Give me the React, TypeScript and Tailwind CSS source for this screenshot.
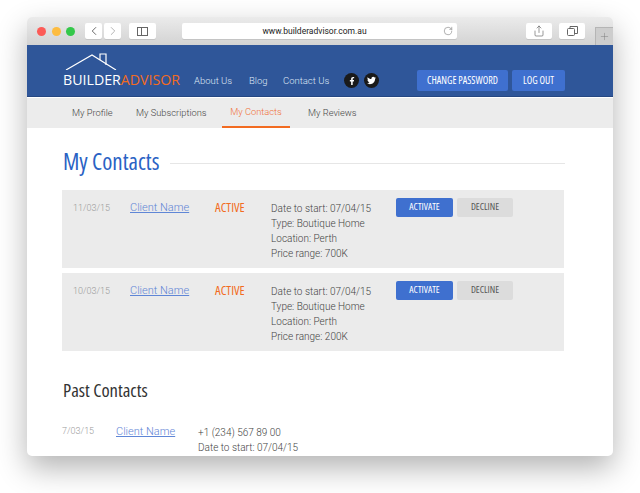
import React from 'react';
import { ChevronLeft, ChevronRight, RotateCw, Share, Plus } from 'lucide-react';
import { FaFacebookF, FaTwitter } from 'react-icons/fa';

const narrow = "font-['Open_Sans',sans-serif] [font-stretch:75%]";

const Toolbar = () => (
  <div className="flex h-[28px] items-center bg-gradient-to-b from-[#ebebeb] to-[#d3d3d3] relative">
    <div className="flex items-center gap-[5.5px] ml-[10px] mr-[11px]">
      <span className="h-[9px] w-[9px] rounded-full bg-[#fc5b57]" />
      <span className="h-[9px] w-[9px] rounded-full bg-[#fdbc40]" />
      <span className="h-[9px] w-[9px] rounded-full bg-[#34c84a]" />
    </div>
    <div className="flex gap-[2px] mr-[8px] -ml-[1px]">
      <button className="flex h-[16px] w-[17px] items-center justify-center rounded-[2px] bg-white shadow-[0_1px_0_#c4c4c4]">
        <ChevronLeft size={14} strokeWidth={1.5} className="text-[#555]" />
      </button>
      <button className="flex h-[16px] w-[17px] items-center justify-center rounded-[2px] bg-white shadow-[0_1px_0_#c4c4c4]">
        <ChevronRight size={14} strokeWidth={1.5} className="text-[#aaa]" />
      </button>
    </div>
    <button className="flex h-[16px] w-[27px] items-center justify-center rounded-[2px] bg-white shadow-[0_1px_0_#c4c4c4] mr-[26px]">
      <span className="flex h-[9px] w-[11px] border border-[#666]">
        <span className="w-[4px] border-r border-[#666]" />
      </span>
    </button>
    <div className="flex h-[16px] w-[275px] items-center rounded-[2px] bg-white shadow-[0_1px_0_#c4c4c4] relative mr-[69px]">
      <span className="flex-1 pr-[10px] text-center font-['Roboto',sans-serif] text-[8.5px] text-[#222]">www.builderadvisor.com.au</span>
      <RotateCw size={10} strokeWidth={1.2} className="absolute right-[4px] text-[#666]" />
    </div>
    <button className="flex h-[16px] w-[26px] items-center justify-center rounded-[2px] bg-white shadow-[0_1px_0_#c4c4c4] mr-[7px]">
      <Share size={12} strokeWidth={1.2} className="text-[#555]" />
    </button>
    <button className="flex h-[16px] w-[26px] items-center justify-center rounded-[2px] bg-white shadow-[0_1px_0_#c4c4c4]">
      <svg width="11" height="10" viewBox="0 0 11 10" fill="none" stroke="#666" strokeWidth="1">
        <rect x="0.5" y="2.5" width="7" height="7" rx="1" />
        <path d="M3 2.5V0.5H10.5V7.5H7.5" />
      </svg>
    </button>
    <div className="absolute right-0 bottom-0 flex h-[18px] w-[18px] items-center justify-center border-l border-t border-[#b5b5b5] bg-[#cdcdcd]">
      <Plus size={11} strokeWidth={1} className="text-[#777]" />
    </div>
  </div>
);

const Header = () => (
  <div className="flex h-[52px] items-end border-b-[1px] border-[#254782] bg-[#2f5699] pl-[36px] pb-[5px]">
    <div className="w-[118px] shrink-0 mr-[13px] mb-[2px]">
      <svg width="60" height="20" viewBox="0 0 60 20" className="ml-[2px] block" fill="none" stroke="white" strokeWidth="1.2">
        <path d="M1 20L27 5L51 20" />
        <path d="M35 10V4H41V15" />
      </svg>
      <div className="font-['Open_Sans',sans-serif] text-[14.2px] leading-[19px] whitespace-nowrap">
        <span className="text-white">BUILDER</span>
        <span className="text-[#f26b21]">ADVISOR</span>
      </div>
    </div>
    <nav className="flex h-[21px] items-center pt-[1px] font-['Roboto',sans-serif] font-light text-[9.5px] text-[#dde5f3]">
      <a className="w-[55px]">About Us</a>
      <a className="w-[34px]">Blog</a>
      <a className="w-[61px]">Contact Us</a>
    </nav>
    <div className="flex h-[21px] items-center gap-[5px] mr-[38px]">
      <span className="flex h-[15px] w-[15px] items-center justify-center rounded-full bg-[#1a1a1a]"><FaFacebookF size={8} className="text-white" /></span>
      <span className="flex h-[15px] w-[15px] items-center justify-center rounded-full bg-[#1a1a1a]"><FaTwitter size={9} className="text-white" /></span>
    </div>
    <div className={`flex gap-[4px] ${narrow} text-[10.1px] text-white`}>
      <button className="h-[21px] w-[91px] rounded-[2px] bg-[#3f70cf] whitespace-nowrap">CHANGE PASSWORD</button>
      <button className="h-[21px] w-[53px] rounded-[2px] bg-[#3f70cf] whitespace-nowrap">LOG OUT</button>
    </div>
  </div>
);

const SubNav = () => (
  <div className="mt-[1px] flex h-[30px] items-stretch bg-[#ececec] pl-[37px] font-['Roboto',sans-serif] font-light text-[9.3px] text-[#444]">
    <a className="flex w-[72px] items-center pl-[8px]">My Profile</a>
    <a className="flex w-[86px] items-center">My Subscriptions</a>
    <a className="flex w-[68px] items-center justify-center border-b-2 border-[#f26b21] text-[#f0703a]">My Contacts</a>
    <a className="flex items-center pl-[18px]">My Reviews</a>
  </div>
);

const Row = ({ date, price }: { date: string; price: string }) => (
  <div className="mb-[5px] flex h-[78px] w-[502px] bg-[#ebebeb] pt-[8px] font-['Roboto',sans-serif]">
    <span className="w-[57px] pl-[11px] pt-[4px] text-[9px] font-light text-[#999]">{date}</span>
    <a className="w-[96px] pl-[11px] pt-[1px] text-[11px] font-light leading-[18px] text-[#5f86d6] underline whitespace-nowrap">Client Name</a>
    <span className={`w-[56px] ${narrow} text-[12.8px] text-[#f26b21]`}>ACTIVE</span>
    <div className="w-[125px] pt-[3px] text-[10px] font-light leading-[15px] text-[#444]">
      <p>Date to start: 07/04/15</p>
      <p>Type: Boutique Home</p>
      <p>Location: Perth</p>
      <p>Price range: {price}</p>
    </div>
    <div className={`flex h-[19px] gap-[4px] ${narrow} text-[9.7px]`}>
      <button className="h-[19px] w-[57px] rounded-[2px] bg-[#3f70cf] text-white">ACTIVATE</button>
      <button className="h-[19px] w-[56px] rounded-[2px] bg-[#dcdcdc] text-[#555]">DECLINE</button>
    </div>
  </div>
);

export default function App() {
  return (
    <div className="h-[493px] w-[640px] overflow-hidden bg-white px-[27px] pt-[17px]">
      <div className="h-[439px] w-[586px] overflow-hidden rounded-[5px] bg-white shadow-[0_12px_30px_rgba(0,0,0,0.3)]">
        <Toolbar />
        <Header />
        <SubNav />
        <main className="pl-[35px]">
          <div className="mt-[18px] mb-[10px] flex h-[34px] items-center pl-[1px]">
            <h1 className={`${narrow} pb-[5px] text-[23px] leading-[34px] text-[#2a62c4] whitespace-nowrap`}>My Contacts</h1>
            <div className="ml-[11px] mr-[48px] h-px flex-1 bg-[#e6e6e6]" />
          </div>
          <Row date="11/03/15" price="700K" />
          <Row date="10/03/15" price="200K" />
          <h2 className={`mt-[24px] pl-[1px] ${narrow} text-[18.6px] leading-[30px] text-[#333]`}>Past Contacts</h2>
          <div className="mt-[18px] flex font-['Roboto',sans-serif]">
            <span className="w-[54px] pt-[2px] text-[9px] font-light text-[#999]">7/03/15</span>
            <a className="w-[82px] text-[11px] font-light leading-[18px] text-[#5f86d6] underline whitespace-nowrap">Client Name</a>
            <div className="pt-[2px] text-[10px] font-light leading-[15px] text-[#444]">
              <p>+1 (234) 567 89 00</p>
              <p>Date to start: 07/04/15</p>
            </div>
          </div>
        </main>
      </div>
    </div>
  );
}
